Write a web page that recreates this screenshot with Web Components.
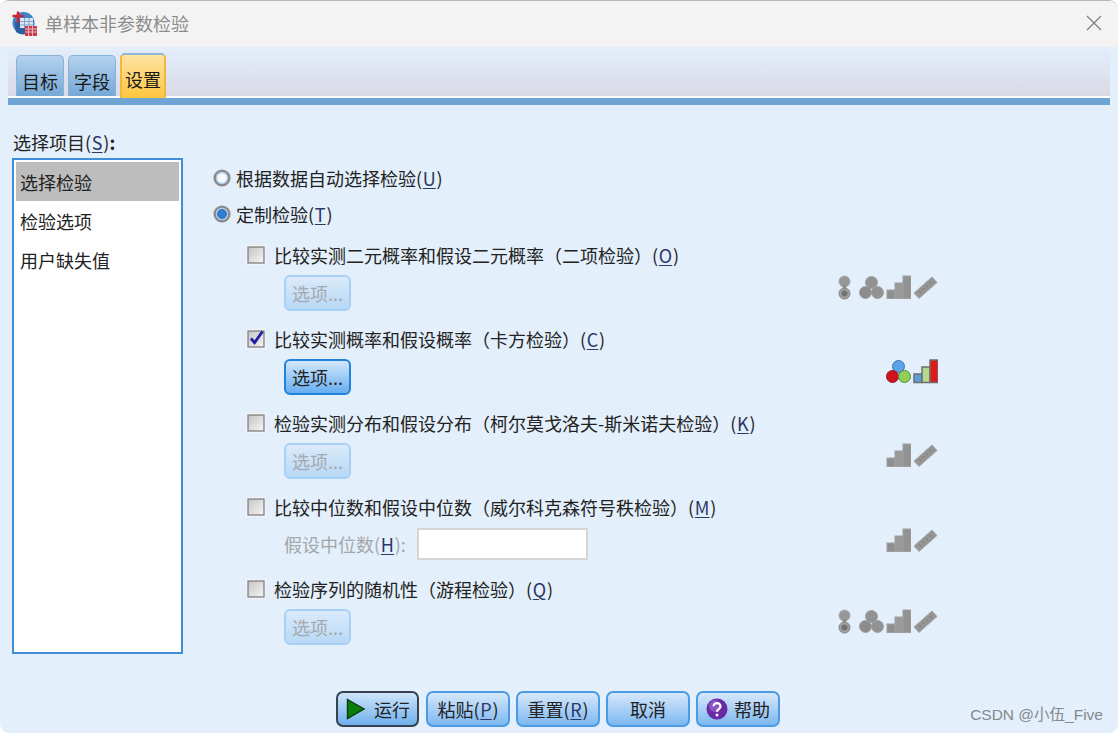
<!DOCTYPE html>
<html lang="zh">
<head>
<meta charset="utf-8">
<title>单样本非参数检验</title>
<style>
  html, body { margin: 0; height: 100%; background: #fff; }
  body { font: 18px/24px "Noto Sans CJK SC", "Noto Sans", sans-serif; color: #222; }
</style>
</head>
<body>
<spss-dialog>
  <spss-titlebar slot="title">单样本非参数检验</spss-titlebar>
  <spss-tab slot="tabs">目标</spss-tab>
  <spss-tab slot="tabs">字段</spss-tab>
  <spss-tab slot="tabs" selected>设置</spss-tab>

  <spss-list slot="side" label="选择项目" key="S">
    <spss-item selected>选择检验</spss-item>
    <spss-item>检验选项</spss-item>
    <spss-item>用户缺失值</spss-item>
  </spss-list>

  <spss-radio>根据数据自动选择检验(<spss-key>U</spss-key>)</spss-radio>
  <spss-radio checked>定制检验(<spss-key>T</spss-key>)</spss-radio>

  <spss-test>
    <spss-check slot="label">比较实测二元概率和假设二元概率（二项检验）(<spss-key>O</spss-key>)</spss-check>
    <spss-button slot="control" small disabled>选项...</spss-button>
    <spss-levels slot="icons" kinds="binary nominal ordinal scale"></spss-levels>
  </spss-test>
  <spss-test>
    <spss-check slot="label" checked>比较实测概率和假设概率（卡方检验）(<spss-key>C</spss-key>)</spss-check>
    <spss-button slot="control" small focused>选项...</spss-button>
    <spss-levels slot="icons" kinds="nominal ordinal" color></spss-levels>
  </spss-test>
  <spss-test>
    <spss-check slot="label">检验实测分布和假设分布（柯尔莫戈洛夫-斯米诺夫检验）(<spss-key>K</spss-key>)</spss-check>
    <spss-button slot="control" small disabled>选项...</spss-button>
    <spss-levels slot="icons" kinds="ordinal scale"></spss-levels>
  </spss-test>
  <spss-test tight>
    <spss-check slot="label">比较中位数和假设中位数（威尔科克森符号秩检验）(<spss-key>M</spss-key>)</spss-check>
    <spss-field slot="control">假设中位数(<spss-key>H</spss-key>):</spss-field>
    <spss-levels slot="icons" kinds="ordinal scale"></spss-levels>
  </spss-test>
  <spss-test>
    <spss-check slot="label">检验序列的随机性（游程检验）(<spss-key>Q</spss-key>)</spss-check>
    <spss-button slot="control" small disabled>选项...</spss-button>
    <spss-levels slot="icons" kinds="binary nominal ordinal scale"></spss-levels>
  </spss-test>

  <spss-button slot="footer" dark icon="run">运行</spss-button>
  <spss-button slot="footer">粘贴(<spss-key>P</spss-key>)</spss-button>
  <spss-button slot="footer">重置(<spss-key>R</spss-key>)</spss-button>
  <spss-button slot="footer">取消</spss-button>
  <spss-button slot="footer" icon="help">帮助</spss-button>

  <spss-watermark slot="mark">CSDN @小伍_Five</spss-watermark>
</spss-dialog>

<script>
// small helper, every element below is just a shadow root + style
function shadow(el, html) {
  el.attachShadow({ mode: 'open' }).innerHTML = html.trim();
}

class SpssDialog extends HTMLElement {
  constructor() {
    super();
    shadow(this, `
      <style>
        :host {
          display: flex; flex-direction: column; position: relative; box-sizing: border-box;
          width: 1118px; height: 733px; overflow: hidden;
          background: #e3effb; border-top: 1px solid #b4b8bb;
          border-radius: 9px;
        }
        .strip {
          display: flex; align-items: flex-end; gap: 4px; box-sizing: border-box;
          height: 51px; margin: 0 8px; padding-left: 8px;
          background: linear-gradient(#e3effb, #d9d9e5);
          border-bottom: 2px solid #fff;
        }
        .bar { height: 7px; margin: 0 8px; background: #6fa5d5; flex: none; }
        .main { flex: 1; display: flex; padding: 25px 0 0 12px; min-height: 0; }
        .panel { display: flex; flex-direction: column; margin: 36px 0 0 31px; width: 724px; }
        .footer { display: flex; justify-content: center; gap: 6px; padding: 0 2px 6px 0; }
      </style>
      <slot name="title"></slot>
      <div class="strip"><slot name="tabs"></slot></div>
      <div class="bar"></div>
      <div class="main">
        <slot name="side"></slot>
        <div class="panel"><slot></slot></div>
      </div>
      <div class="footer"><slot name="footer"></slot></div>
      <slot name="mark"></slot>`);
  }
}

class SpssTitlebar extends HTMLElement {
  constructor() {
    super();
    shadow(this, `
      <style>
        :host {
          display: flex; align-items: center; flex: none; box-sizing: border-box;
          height: 46px; padding: 0 16px 2px 12px; gap: 8px;
          background: #f3f3f3; color: #8c8c8c;
        }
        .t { flex: 1; }
        svg { display: block; }
      </style>
      <svg width="25" height="25" viewBox="0 0 25 25">
        <circle cx="11.500" cy="12" r="11" fill="#3f83c4"/>
        <path d="M4 21a11 11 0 0 0 10 2l6-6V8L8 7 3 12z" fill="#2a5f9c"/>
        <rect x="8" y="7" width="13" height="10" fill="#dfe8f2"/>
        <path d="M8 10.500h13M8 14h13M12.500 7v10M17 7v10" stroke="#7fa3c8" fill="none"/>
        <path d="M0.500 5h11M6 0.500v11" stroke="#d6202c" stroke-width="2.400" fill="none"/>
        <rect x="13" y="15" width="12" height="10" fill="#c93a4c"/>
        <path d="M13 18h12M13 21h12M16.500 15v10M20.500 15v10" stroke="#f0b6bd" stroke-width="1" fill="none"/>
      </svg>
      <span class="t"><slot></slot></span>
      <svg width="16" height="16" viewBox="0 0 16 16"><path d="M1 1l14 14M15 1L1 15" stroke="#7d7d7d" stroke-width="1.200" fill="none"/></svg>`);
  }
}

class SpssTab extends HTMLElement {
  constructor() {
    super();
    shadow(this, `
      <style>
        :host {
          display: flex; align-items: center; justify-content: center; box-sizing: border-box;
          width: 48px; height: 41px; padding-top: 10px;
          border: 1px solid #86b3d8; border-bottom: none; border-radius: 5px 5px 0 0;
          background: linear-gradient(#b4d2ee, #74a8d6); color: #1a1a1a;
        }
        :host([selected]) {
          width: 46px; height: 47px; margin: 0 0 -4px 0; padding: 4px 0 0;
          border: 2px solid #f0b840; border-top: 2px solid #8fb4d6; border-radius: 5px 5px 2px 2px;
          background: linear-gradient(#ffe3a4, #ffc63e);
        }
      </style>
      <slot></slot>`);
  }
}

class SpssList extends HTMLElement {
  constructor() {
    super();
    shadow(this, `
      <style>
        :host { display: flex; flex-direction: column; flex: none; width: 171px; height: 524px; }
        .lab { height: 24px; margin: 0 0 4px 1px; }
        .box {
          box-sizing: border-box; height: 496px; padding: 2px;
          background: #fff; border: 2px solid #3d8fd8;
        }
      </style>
      <div class="lab">${this.getAttribute('label')}(<spss-key>${this.getAttribute('key')}</spss-key>)<b>:</b></div>
      <div class="box"><slot></slot></div>`);
  }
}

class SpssItem extends HTMLElement {
  constructor() {
    super();
    shadow(this, `
      <style>
        :host { display: flex; align-items: center; box-sizing: border-box; height: 39px; padding: 0 4px; }
        :host([selected]) { background: #bdbdbd; }
      </style>
      <slot></slot>`);
  }
}

class SpssKey extends HTMLElement {
  constructor() {
    super();
    shadow(this, `
      <style>
        :host { display: inline; color: #2c3866; padding: 0 .75px; }
        u { text-underline-offset: 2px; }
      </style><u><slot></slot></u>`);
  }
}

class SpssRadio extends HTMLElement {
  constructor() {
    super();
    const dot = this.hasAttribute('checked')
      ? '<circle cx="9" cy="9" r="4.500" fill="#2f7fd6" stroke="#1c5fa8" stroke-width=".8"/>'
      : '';
    shadow(this, `
      <style>
        :host { display: flex; align-items: center; gap: 5px; height: 24px; margin: 0 0 12px -1px; }
        :host([checked]) { margin-bottom: 17px; }
        svg { flex: none; }
      </style>
      <svg width="18" height="18" viewBox="0 0 18 18">
        <circle cx="9" cy="9" r="7.300" fill="#fff" stroke="#8c8c8c" stroke-width="2.600"/>
        <circle cx="9" cy="9" r="5.400" fill="#f6f9fc" stroke="#a3c9ec" stroke-width="1.200"/>
        ${dot}
      </svg>
      <span><slot></slot></span>`);
  }
}

class SpssCheck extends HTMLElement {
  constructor() {
    super();
    const tick = this.hasAttribute('checked')
      ? '<path d="M5 9.500l3.600 4.200L16.500 2.500" fill="none" stroke="#1f1fa8" stroke-width="2.800"/>'
      : '';
    shadow(this, `
      <style>
        :host { display: flex; align-items: center; gap: 7px; height: 24px; margin-left: -1px; white-space: nowrap; }
        svg { flex: none; }
        span { margin-left: 1px; }
      </style>
      <svg width="20" height="20" viewBox="0 0 20 20">
        <defs><linearGradient id="g" x1="0" y1="0" x2="1" y2="1"><stop offset="0" stop-color="#c4c4c4"/><stop offset="1" stop-color="#f6f6f6"/></linearGradient></defs>
        <rect x=".5" y=".5" width="19" height="19" fill="#fff" stroke="#f1f5f9"/>
        <rect x="2" y="2" width="16" height="16" fill="url(#g)" stroke="#858585" stroke-width="1.400"/>
        ${tick}
      </svg>
      <span><slot></slot></span>`);
  }
}

class SpssTest extends HTMLElement {
  constructor() {
    super();
    shadow(this, `
      <style>
        :host {
          display: grid; grid-template-columns: 1fr auto; row-gap: 8px;
          margin: 0 0 16px 33px; width: 691px;
        }
        :host([tight]) { row-gap: 9px; margin-bottom: 18px; }
        .label { grid-column: 1 / 3; }
        .ctl { padding-left: 37px; }
      </style>
      <div class="label"><slot name="label"></slot></div>
      <div class="ctl"><slot name="control"></slot></div>
      <div class="ico"><slot name="icons"></slot></div>`);
  }
}

class SpssField extends HTMLElement {
  constructor() {
    super();
    shadow(this, `
      <style>
        :host { display: flex; align-items: center; gap: 11px; color: #a3a6aa; height: 31px; }
        .in { box-sizing: border-box; width: 171px; height: 32px; background: #fff; border: 2px solid #d4d5d7; }
      </style>
      <span><slot></slot></span><div class="in"></div>`);
  }
}

class SpssButton extends HTMLElement {
  constructor() {
    super();
    const kind = this.getAttribute('icon');
    let icon = '';
    if (kind === 'run') {
      icon = '<svg width="20" height="22" viewBox="0 0 20 22"><path d="M1.500 1.500L18 11 1.500 20.500z" fill="#0b7d0b" stroke="#0b3d0b" stroke-width="1.400"/></svg>';
    } else if (kind === 'help') {
      icon = `<svg width="22" height="22" viewBox="0 0 22 22">
        <circle cx="11" cy="11" r="10.500" fill="#6a2aa6"/><circle cx="9" cy="8" r="6" fill="#9a6ad0" opacity=".7"/>
        <path d="M7.500 8.200a3.500 3.200 0 1 1 5.400 2.800c-1.200.8-1.900 1.300-1.900 2.800" fill="none" stroke="#fff" stroke-width="2.200"/>
        <circle cx="11" cy="17" r="1.500" fill="#fff"/></svg>`;
    }
    shadow(this, `
      <style>
        :host {
          display: flex; align-items: center; justify-content: center; gap: 8px; box-sizing: border-box;
          width: 84px; height: 36px; color: #222;
          border: 2px solid #4a9be4; border-radius: 7px;
          background: linear-gradient(#d6e8fb, #7db8f0);
        }
        :host([dark]) { width: 83px; margin-right: 1px; border-color: #38424e; gap: 8px; padding-left: 1px; background: linear-gradient(#cfe4f9, #6fb0ee); }
        :host([icon=help]) { gap: 6px; }
        :host([small]) { width: 67px; height: 36px; border-radius: 6px; }
        :host([disabled]) { color: #a6a9ad; border-color: #a8d0f4; background: linear-gradient(#dbeafa, #b7d8f6); }
        :host([focused]) { border-color: #1f82dc; background: linear-gradient(#d3e7fb, #66aef0); }
        svg { flex: none; }
      </style>
      ${icon}<span><slot></slot></span>`);
  }
}

const LEVELS = {
  binary: () => `<circle cx="6.500" cy="6.500" r="5.500" fill="#979797" stroke="#ababab"/>
    <rect x="5" y="10" width="3" height="5" fill="#8c8c8c"/>
    <circle cx="6.500" cy="18.500" r="5.500" fill="#a0a0a0" stroke="#838383"/><circle cx="6.500" cy="18.500" r="3" fill="#727272"/>`,
  nominal: (c) => `<circle cx="12.500" cy="7.500" r="6" fill="${c ? '#5da3e6' : '#929292'}" stroke="${c ? '#3d76b8' : '#a0a0a0'}"/>
    <circle cx="6.500" cy="17.500" r="6" fill="${c ? '#d3121f' : '#8c8c8c'}" stroke="${c ? '#8f1a22' : '#a0a0a0'}"/>
    <circle cx="18.500" cy="17.500" r="6" fill="${c ? '#8fcf5a' : '#929292'}" stroke="${c ? '#4f8f2f' : '#a0a0a0'}"/>`,
  ordinal: (c) => `<rect x="1" y="15" width="8" height="8.500" fill="${c ? '#5b9ee0' : '#8f8f8f'}" stroke="${c ? '#6d6d6d' : '#a0a0a0'}" stroke-width="${c ? 1.5 : 1}"/>
    <rect x="9" y="8" width="8" height="15.500" fill="${c ? '#b5d98f' : '#9a9a9a'}" stroke="${c ? '#6d6d6d' : '#a0a0a0'}" stroke-width="${c ? 1.5 : 1}"/>
    <rect x="17" y="1" width="8" height="22.500" fill="${c ? '#e01818' : '#929292'}" stroke="${c ? '#6d6d6d' : '#a0a0a0'}" stroke-width="${c ? 1.5 : 1}"/>`,
  scale: () => `<path d="M1 18L19 2l5 5.500L6 23.500z" fill="#959595" stroke="#a6a6a6"/>
    <path d="M6 16l2 2M9.500 13l2 2M13 10l2 2M16.500 7l2 2" stroke="#777" fill="none"/>`
};

class SpssLevels extends HTMLElement {
  constructor() {
    super();
    const color = this.hasAttribute('color');
    const icons = this.getAttribute('kinds').split(' ').map(k => {
      const w = k === 'binary' ? 13 : 25;
      return `<svg class="${k}" width="${w}" height="25" viewBox="0 0 ${w} 25">${LEVELS[k](color)}</svg>`;
    }).join('');
    shadow(this, `
      <style>
        :host { display: flex; align-items: flex-start; justify-content: flex-end; gap: 2px; }
        .binary { margin-right: 6px; }
        svg { display: block; }
      </style>${icons}`);
  }
}

class SpssWatermark extends HTMLElement {
  constructor() {
    super();
    shadow(this, `
      <style>
        :host {
          position: absolute; right: 15px; bottom: 8px;
          font: 15.500px/20px "Liberation Sans", "Noto Sans CJK SC", sans-serif; color: #85888d;
        }
      </style>
      <slot></slot>`);
  }
}

customElements.define('spss-key', SpssKey);
customElements.define('spss-dialog', SpssDialog);
customElements.define('spss-titlebar', SpssTitlebar);
customElements.define('spss-tab', SpssTab);
customElements.define('spss-list', SpssList);
customElements.define('spss-item', SpssItem);
customElements.define('spss-radio', SpssRadio);
customElements.define('spss-check', SpssCheck);
customElements.define('spss-test', SpssTest);
customElements.define('spss-field', SpssField);
customElements.define('spss-button', SpssButton);
customElements.define('spss-levels', SpssLevels);
customElements.define('spss-watermark', SpssWatermark);
</script>
</body>
</html>
